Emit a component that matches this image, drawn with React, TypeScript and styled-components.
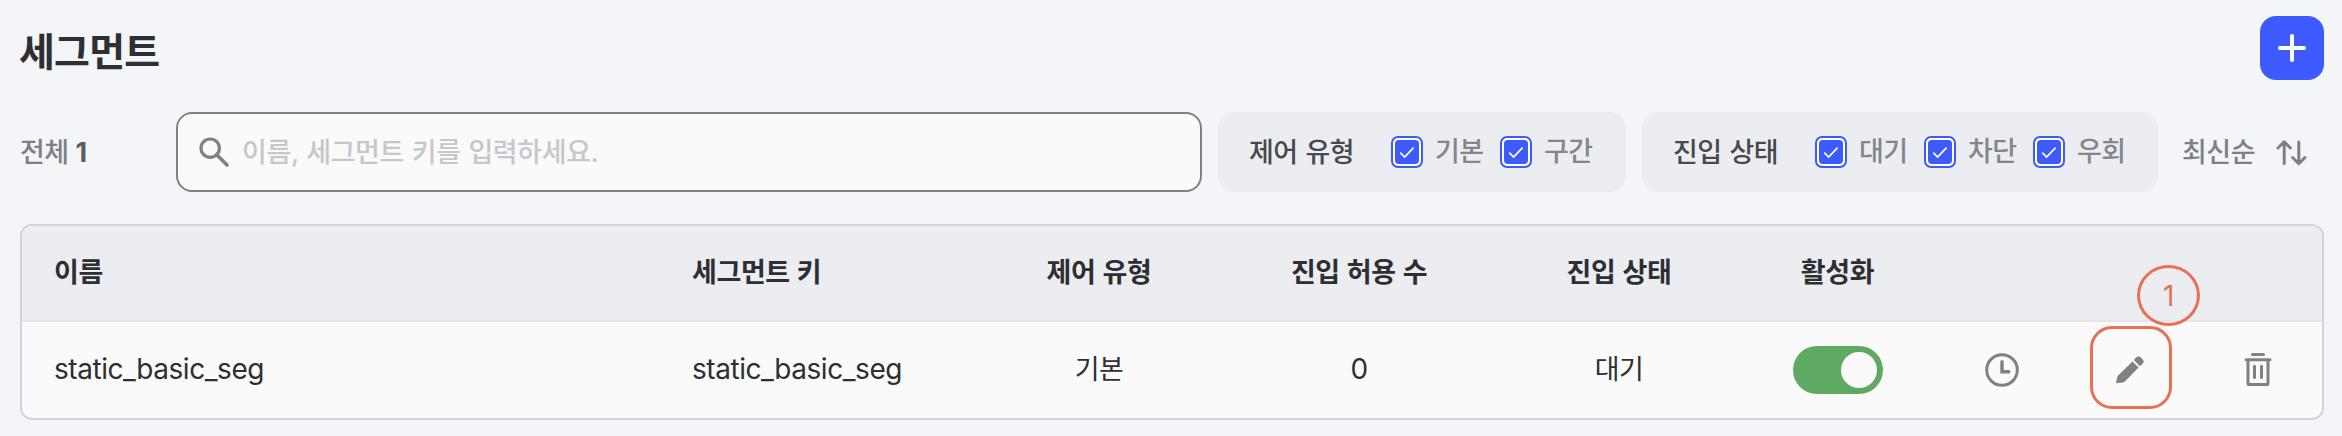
import React from "react";
import styled, { createGlobalStyle } from "styled-components";

const Global = createGlobalStyle`
  * { box-sizing: border-box; }
  body {
    margin: 0;
    background: #f4f5f8;
    font-family: Inter, "Noto Sans CJK KR", sans-serif;
    color: #2e2f33;
  }
`;

const Page = styled.main`
  height: 436px;
  padding: 16px 18px 16px 20px;
  display: flex;
  flex-direction: column;
  font-size: 27px;
  line-height: 40px;
  letter-spacing: -0.5px;
  word-spacing: 1px;
`;

const TitleBar = styled.header`
  display: flex;
  justify-content: space-between;
  height: 96px;
`;

const Title = styled.h1`
  margin: 0 0 0 -1px;
  font-size: 39px;
  line-height: 72px;
  font-weight: 700;
  letter-spacing: -0.8px;
`;

const AddButton = styled.button`
  width: 64px;
  height: 64px;
  padding: 0;
  border: 0;
  border-radius: 16px;
  background: #3d5afe;
  display: grid;
  place-items: center;
`;

const Toolbar = styled.section`
  display: flex;
  height: 80px;
  align-items: center;
`;

const Total = styled.div`
  width: 156px;
  padding-top: 2px;
  font-weight: 500;
  word-spacing: 0;
  color: #7f8084;
  b { color: #5c5d61; font-weight: 700; }
`;

const SearchBox = styled.div`
  width: 1026px;
  height: 80px;
  border: 2px solid #808186;
  border-radius: 16px;
  background: #fafafa;
  display: flex;
  align-items: center;
  padding-left: 20px;
  gap: 12px;
`;

const Placeholder = styled.span`
  padding-top: 2px;
  font-weight: 500;
  letter-spacing: -0.4px;
  color: #c6c6cb;
`;

const FilterGroup = styled.div<{ $width: number }>`
  width: ${(p) => p.$width}px;
  height: 80px;
  margin-left: 16px;
  padding-left: 31px;
  border-radius: 16px;
  background: #ecedf1;
  display: flex;
  align-items: center;
`;

const FilterName = styled.span`
  width: 142px;
  padding-top: 1px;
  font-weight: 500;
  color: #48494d;
`;

const Option = styled.label`
  width: 109px;
  display: flex;
  align-items: center;
  gap: 12px;
  font-weight: 500;
  color: #85868a;
  white-space: nowrap;
`;

const CheckMark = styled.span`
  width: 32px;
  height: 32px;
  flex: none;
  border: 2px solid #3d5afe;
  border-radius: 7px;
  background: #fff;
  padding: 2px;
  svg { display: block; background: #3d5afe; border-radius: 4px; }
`;

const Sort = styled.div`
  margin-left: 24px;
  display: flex;
  align-items: center;
  gap: 21px;
  padding-top: 1px;
  font-weight: 500;
  color: #7f8084;
`;

const Table = styled.section`
  margin-top: 32px;
  height: 196px;
  border: 2px solid #d3d4d9;
  border-radius: 12px;
  background: #fafafa;
`;

const Row = styled.div<{ $head?: boolean }>`
  height: 96px;
  padding-left: 32px;
  display: grid;
  grid-template-columns: 638px 277px repeat(3, 260px) 177px 12px repeat(3, 128px);
  align-items: center;
  ${(p) =>
    p.$head &&
    "background: #ecedf1; border-bottom: 2px solid #e4e4e9; border-radius: 10px 10px 0 0; font-weight: 700; letter-spacing: -0.4px;"}
`;

const Cell = styled.div<{ $center?: boolean }>`
  display: flex;
  align-items: center;
  justify-content: ${(p) => (p.$center ? "center" : "flex-start")};
`;

const Value = styled(Cell)<{ $latin?: boolean }>`
  padding-bottom: ${(p) => (p.$latin ? 2 : 0)}px;
  ${(p) => p.$latin && "font-size: 28px; letter-spacing: -0.45px;"}
`;

const Toggle = styled.span`
  width: 90px;
  height: 48px;
  border-radius: 24px;
  background: #5eaa63;
  padding: 6px;
  display: flex;
  justify-content: flex-end;
  &::after { content: ""; width: 36px; height: 36px; border-radius: 50%; background: #fafafa; }
`;

const EditAction = styled.div`
  position: relative;
  display: grid;
  place-items: center;
`;

const Highlight = styled.span`
  position: absolute;
  left: -26px;
  top: -30px;
  width: 82px;
  height: 83px;
  border: 3px solid #e96f55;
  border-radius: 22px;
`;

const StepBadge = styled.span`
  position: absolute;
  left: 21px;
  top: -91px;
  width: 63px;
  height: 61px;
  border: 3px solid #e96f55;
  border-radius: 50%;
  color: #e96f55;
  font-size: 28px;
  line-height: 56px;
  text-align: center;
`;

const Check = () => (
  <CheckMark>
    <svg width="24" height="24" viewBox="0 0 24 24" fill="none" stroke="#fff" strokeWidth="1.7">
      <path d="M5.3 12.7 9.6 17 18.6 7.6" />
    </svg>
  </CheckMark>
);

const Filter = ({ name, options, width }: { name: string; options: string[]; width: number }) => (
  <FilterGroup $width={width}>
    <FilterName>{name}</FilterName>
    {options.map((o) => (
      <Option key={o}><Check />{o}</Option>
    ))}
  </FilterGroup>
);

export default function App() {
  return (
    <>
      <Global />
      <Page>
        <TitleBar>
          <Title>세그먼트</Title>
          <AddButton aria-label="추가">
            <svg width="28" height="28" viewBox="0 0 28 28" stroke="#fff" strokeWidth="4" strokeLinecap="round">
              <path d="M14 2v24M2 14h24" />
            </svg>
          </AddButton>
        </TitleBar>
        <Toolbar>
          <Total>전체 <b>1</b></Total>
          <SearchBox>
            <svg width="32" height="32" viewBox="0 0 32 32" fill="none" stroke="#808185" strokeWidth="3.2">
              <circle cx="12.2" cy="12.2" r="9.2" />
              <path d="M18.8 18.8 29 29" strokeWidth="3.6" strokeLinecap="round" />
            </svg>
            <Placeholder>이름, 세그먼트 키를 입력하세요.</Placeholder>
          </SearchBox>
          <Filter name="제어 유형" options={["기본", "구간"]} width={408} />
          <Filter name="진입 상태" options={["대기", "차단", "우회"]} width={516} />
          <Sort>
            최신순
            <svg width="31" height="26" viewBox="0 0 31 26" fill="none" stroke="#7f8084" strokeWidth="3" strokeLinecap="round" strokeLinejoin="round">
              <path d="M8.2 23.5V2.5M2 8 8.2 1.8 14.4 8M22.8 2V23.5M16.6 17.5l6.2 6.2L29 17.5" />
            </svg>
          </Sort>
        </Toolbar>
        <Table>
          <Row $head>
            <Cell>이름</Cell>
            <Cell>세그먼트 키</Cell>
            <Cell $center>제어 유형</Cell>
            <Cell $center>진입 허용 수</Cell>
            <Cell $center>진입 상태</Cell>
            <Cell $center>활성화</Cell>
          </Row>
          <Row>
            <Value $latin>static_basic_seg</Value>
            <Value $latin>static_basic_seg</Value>
            <Value $center>기본</Value>
            <Value $center $latin>0</Value>
            <Value $center>대기</Value>
            <Cell $center><Toggle /></Cell>
            <span />
            <Cell $center>
              <svg width="34" height="34" viewBox="0 0 34 34" fill="none" stroke="#808185" strokeWidth="3">
                <circle cx="17" cy="17" r="15.3" />
                <path d="M17 8.8v10h6.8" strokeWidth="3.4" strokeLinecap="round" />
              </svg>
            </Cell>
            <Cell $center>
              <EditAction>
                <svg width="28" height="28" viewBox="0 0 28 28" fill="#808185">
                  <path d="M.8 27.2q-.7 0-.6-.8L1.2 21 2.200 19.400 16.4 5.400 22.6 11.600 8.600 25.800 7 26.600Z" />
                  <path d="M17.8 4 20.5 1.3q2-1.9 4 0l2.2 2.200q1.900 2 0 4L24 10.200Z" />
                </svg>
                <Highlight />
                <StepBadge>1</StepBadge>
              </EditAction>
            </Cell>
            <Cell $center>
              <svg width="28" height="36" viewBox="0 0 28 36" fill="none" stroke="#808185" strokeWidth="3">
                <path d="M8.5 2.5h11M2 7.8h24M4 8v23.8q0 .7.7.7h18.6q.7 0 .7-.7V8M10.500 14.200v11.200M17.500 14.200v11.200" strokeLinecap="round" />
              </svg>
            </Cell>
          </Row>
        </Table>
      </Page>
    </>
  );
}
